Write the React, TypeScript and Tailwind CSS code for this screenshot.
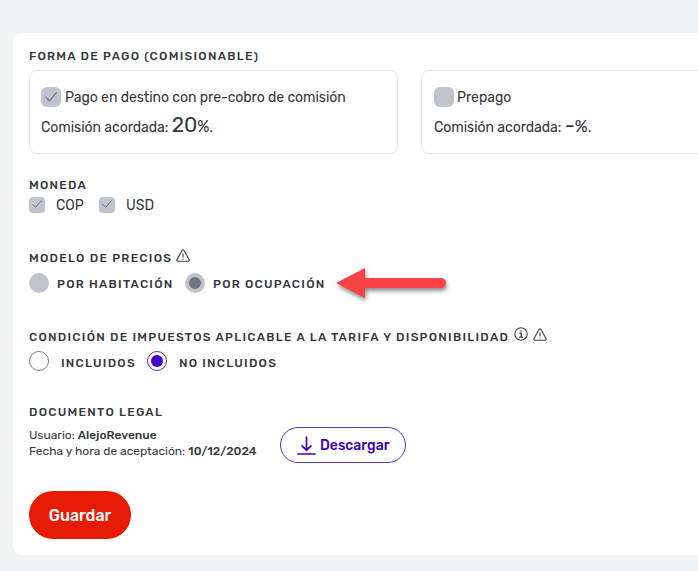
import React from 'react';
import clsx from 'clsx';

interface TextProps {
  children: React.ReactNode;
  className?: string;
}

const Heading: React.FC<TextProps> = ({ children, className }) => (
  <h2 className={clsx('h-4 leading-4 text-xs font-medium whitespace-nowrap tracking-[1.26px]', className)}>
    {children}
  </h2>
);

const Checkbox: React.FC<{ checked?: boolean; small?: boolean }> = ({ checked, small }) => (
  <span
    className={clsx(
      'shrink-0 flex items-center justify-center bg-[#bfc3cd]',
      small ? 'size-4 rounded-[4px] pb-[2px]' : 'size-5 rounded-[6px]'
    )}
  >
    {checked && (
      <svg viewBox="0 0 12 10" className={small ? 'w-[10px]' : 'w-3'} fill="none" stroke="#6f7480" strokeWidth="1.2">
        <path d="M0.8 5.2 4.3 8.8 11.3 0.8" strokeLinecap="round" strokeLinejoin="round" />
      </svg>
    )}
  </span>
);

const Radio: React.FC<{ checked?: boolean; disabled?: boolean }> = ({ checked, disabled }) => (
  <span
    className={clsx(
      'size-5 shrink-0 rounded-full flex items-center justify-center',
      disabled && 'bg-[#bfc3cd]',
      !disabled && 'border bg-white',
      !disabled && (checked ? 'border-[#5a2fb5]' : 'border-[#808080]')
    )}
  >
    {checked && <span className={clsx('size-3 rounded-full', disabled ? 'bg-[#6f7480]' : 'bg-[#4000d0]')} />}
  </span>
);

const WarningIcon: React.FC<{ className?: string }> = ({ className }) => (
  <svg viewBox="0 0 14 13" className={clsx('w-[14px] h-[13px] shrink-0', className)} fill="none" stroke="#3c3f44" strokeWidth="1.1">
    <path d="M6.1 1.3 0.9 10.7Q0.4 12.1 1.8 12.2H12.2Q13.6 12.1 13.1 10.7L7.9 1.3Q7 0.1 6.1 1.3Z" strokeLinejoin="round" />
    <path d="M7 4.4V8.3M7 9.4V10.4" />
  </svg>
);

const InfoIcon: React.FC<{ className?: string }> = ({ className }) => (
  <svg viewBox="0 0 14 14" className={clsx('size-[14px] shrink-0', className)} fill="none" stroke="#3c3f44" strokeWidth="1.1">
    <circle cx="7" cy="7" r="6.2" />
    <path d="M5.5 6.2H7.3V10M5.2 10.2H9M6.3 3.9H7.6" strokeWidth="1.3" />
  </svg>
);

const App: React.FC = () => {
  return (
    <div className="w-[698px] h-[571px] overflow-hidden bg-[#f2f3f5] pt-[33px] pl-[13px] font-['Rubik','Roboto',sans-serif] text-[#35383d]">
      <main className="h-[522px] rounded-l-lg bg-white pl-4 pt-[15px]">
        {/* forma de pago */}
        <section className="h-[129px]">
          <Heading>FORMA DE PAGO (COMISIONABLE)</Heading>
          <div className="flex gap-[23px] mt-[6px]">
            <div className="w-[369px] h-[84px] shrink-0 rounded-lg border border-[#e3e6e9] pl-[11px] pt-4">
              <div className="h-5 flex items-center gap-1">
                <Checkbox checked />
                <span className="pt-px text-sm tracking-[-0.06px] whitespace-nowrap">Pago en destino con pre-cobro de comisión</span>
              </div>
              <p className="h-7 leading-7 mt-1 text-sm whitespace-nowrap tracking-[-0.04px]">
                Comisión acordada: <span className="text-[21px]">20</span>
                <span className="text-base">%</span>.
              </p>
            </div>
            <div className="w-[369px] h-[84px] shrink-0 rounded-lg border border-[#e3e6e9] pl-3 pt-4">
              <div className="h-5 flex items-center gap-[3px]">
                <Checkbox />
                <span className="pt-px text-sm tracking-[-0.04px]">Prepago</span>
              </div>
              <p className="h-7 leading-7 mt-1 text-sm whitespace-nowrap tracking-[-0.04px]">
                Comisión acordada: <span className="text-[21px]">-</span>
                <span className="text-[17px]">%</span>.
              </p>
            </div>
          </div>
        </section>

        {/* moneda */}
        <section className="h-[73px]">
          <Heading>MONEDA</Heading>
          <div className="flex items-center mt-1 h-4 text-sm">
            <Checkbox checked small />
            <span className="ml-[11px] w-[43px] pt-px">COP</span>
            <Checkbox checked small />
            <span className="ml-[11px] pt-px">USD</span>
          </div>
        </section>

        {/* modelo de precios */}
        <section className="h-[79px]">
          <div className="flex items-start">
            <Heading className="w-[147px]">MODELO DE PRECIOS</Heading>
            <WarningIcon className="-mt-px" />
          </div>
          <div className="flex items-center h-5 mt-[7px] text-xs font-medium whitespace-nowrap tracking-[1.24px]">
            <Radio disabled />
            <span className="ml-2 w-[128px] pt-[2px]">POR HABITACIÓN</span>
            <Radio disabled checked />
            <span className="ml-2 w-[123px] pt-[2px]">POR OCUPACIÓN</span>
            <svg width="118" height="40" viewBox="0 0 118 40" className="shrink-0 overflow-visible drop-shadow-[1px_3px_2px_rgba(0,0,0,0.45)]">
              <path d="M0 20 29 5V15H105A5 5 0 0 1 105 25H29V35Z" fill="#fb4245" />
            </svg>
          </div>
        </section>

        {/* impuestos */}
        <section className="h-[75px]">
          <div className="flex items-start gap-[5px]">
            <Heading className="w-[480px]">
              CONDICIÓN DE IMPUESTOS APLICABLE A LA TARIFA Y DISPONIBILIDAD
            </Heading>
            <InfoIcon className="-mt-[2px]" />
            <WarningIcon className="-mt-px" />
          </div>
          <div className="flex items-center h-5 mt-[6px] text-xs font-medium whitespace-nowrap tracking-[1.24px]">
            <Radio />
            <span className="ml-3 w-[86px] pt-[3px]">INCLUIDOS</span>
            <Radio checked />
            <span className="ml-3 pt-[3px]">NO INCLUIDOS</span>
          </div>
        </section>

        {/* documento legal */}
        <section className="h-[87px] flex">
          <div className="w-[251px]">
            <Heading>DOCUMENTO LEGAL</Heading>
            <div className="mt-[7px] text-xs leading-4 whitespace-nowrap">
              <p>Usuario: <b className="font-medium">AlejoRevenue</b></p>
              <p>Fecha y hora de aceptación: <b className="font-medium">10/12/2024</b></p>
            </div>
          </div>
          <button className="w-[126px] h-9 mt-[23px] rounded-full border border-[#5b37b0] flex items-center pl-4 text-[#4000b8] text-sm font-medium">
            <svg width="19" height="19" viewBox="0 0 19 19" fill="none" stroke="currentColor" strokeWidth="1.7" strokeLinecap="round" className="mr-1 shrink-0">
              <path d="M9.5 1V14M5 9.8 9.5 14.2 14 9.8M1 18H18" />
            </svg>
            <span className="pt-[2px]">Descargar</span>
          </button>
        </section>

        <button className="w-[102px] h-12 pt-px rounded-full bg-[#e61b05] text-white text-base font-medium">
          Guardar
        </button>
      </main>
    </div>
  );
};

export default App;
